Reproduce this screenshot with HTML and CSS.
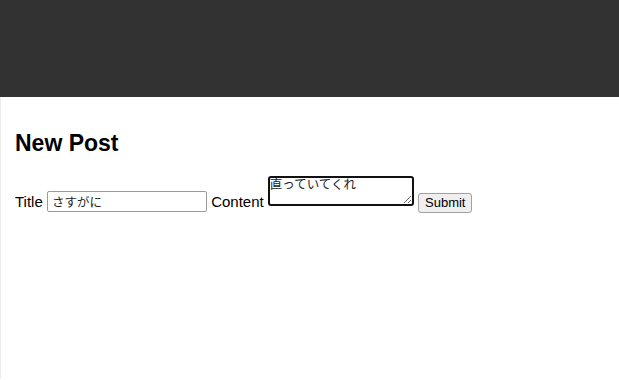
FILE: index.html
```html
<!DOCTYPE html>
<html lang="ja">
<head>
    <meta charset="UTF-8">
    <meta name="viewport" content="width=device-width, initial-scale=1.0">
    <title>New Post</title>
    <link rel="stylesheet" href="styles.css">
</head>
<body>
    <header class="top-bar"></header>
    <main class="page">
        <h2 class="page-title">New Post</h2>
        <form class="post-form">
            <label for="title">Title</label>
            <input type="text" id="title" class="title-input" value="さすがに">
            <label for="content">Content</label>
            <textarea id="content" class="content-input">直っていてくれ</textarea>
            <button type="submit" class="submit-button">Submit</button>
        </form>
    </main>
</body>
</html>
```

FILE: styles.css
```css
body {
    margin: 0;
    font-family: "Liberation Sans", Arial, "Noto Sans CJK JP", sans-serif;
    font-size: 15px;
    color: #000;
    background: #fff;
}

/* Barra superior */
.top-bar {
    height: 97px;
    background-color: #323232;
}

.page {
    padding: 1px 14px 0;
    border-left: 1px solid #ececec;
    min-height: 282px;
    box-sizing: border-box;
}

.page-title {
    font-size: 23px;
    margin: 32px 0 19px;
}

.post-form label {
    font-size: 15px;
}

.title-input {
    width: 160px;
    height: 21px;
    box-sizing: border-box;
    padding: 1px 4px;
    border: 1px solid #9a9a9a;
    border-radius: 2px;
    font-family: "Liberation Sans", "Noto Sans CJK JP", sans-serif;
    font-size: 12.5px;
    color: #222;
}

.content-input {
    width: 146px;
    height: 30px;
    box-sizing: border-box;
    padding: 0;
    border: 2px solid #111;
    border-radius: 3px;
    font-family: "Liberation Sans", "Noto Sans CJK JP", sans-serif;
    font-size: 12.5px;
    line-height: 15px;
    color: #222;
    vertical-align: 1px;
    outline: none;
}

.submit-button {
    height: 20px;
    padding: 0 6px;
    background-color: #efefef;
    border: 1px solid #a0a0a0;
    border-radius: 3px;
    font-family: "Liberation Sans", Arial, sans-serif;
    font-size: 13px;
    color: #000;
}
```
